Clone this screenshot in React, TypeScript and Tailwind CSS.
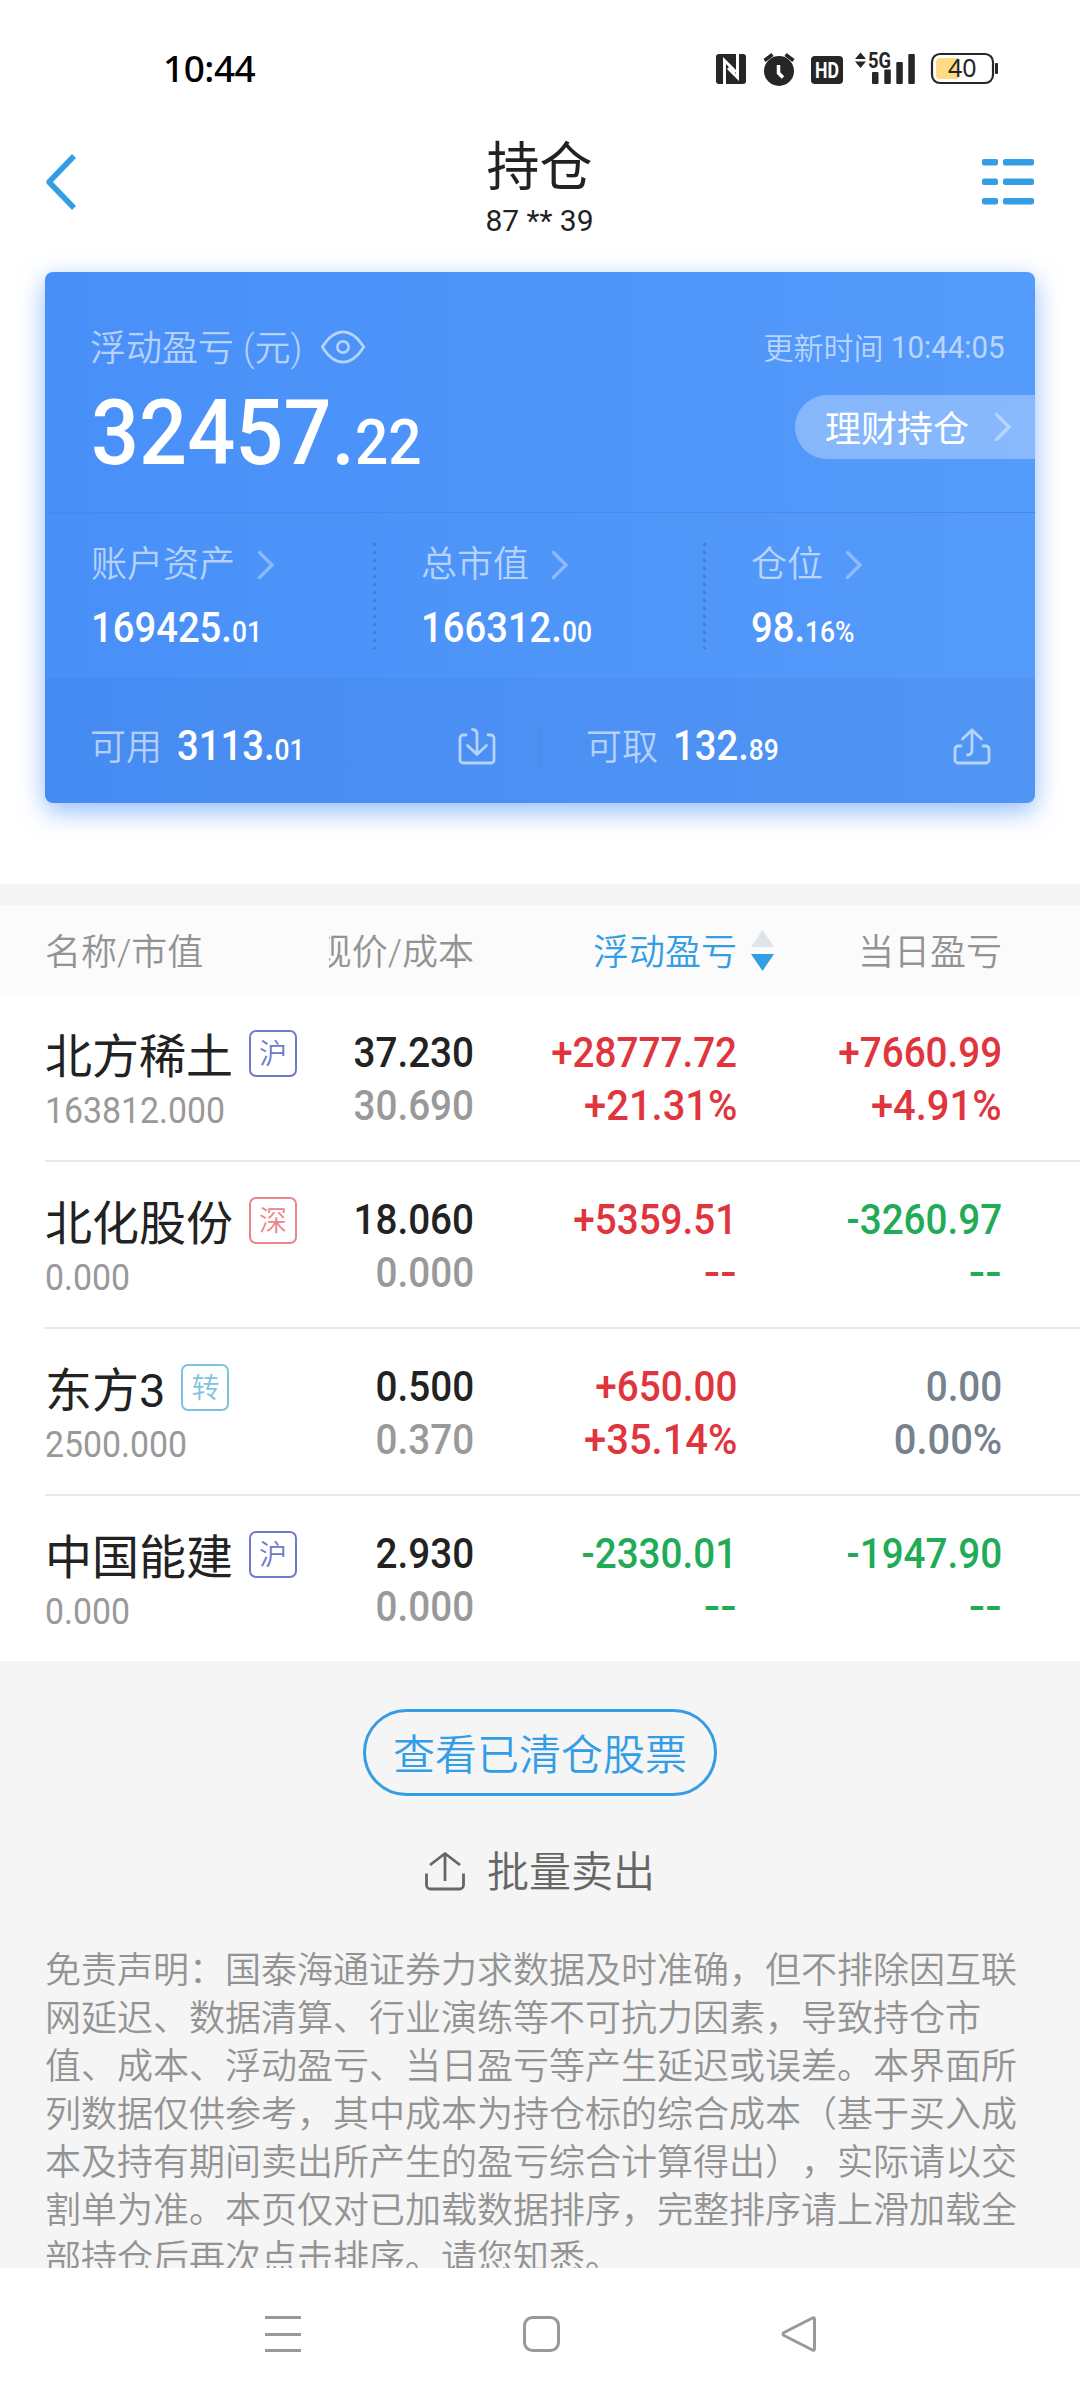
import { FC } from "react";
import clsx from "clsx";

type Tone = "up" | "down" | "flat";
type Market = "sh" | "sz" | "cv";

interface Holding {
  name: string;
  market: Market;
  value: string;
  price: string;
  cost: string;
  profit: [string, string];
  profitTone: Tone;
  today: [string, string];
  todayTone: Tone;
}

const holdings: Holding[] = [
  { name: "北方稀土", market: "sh", value: "163812.000", price: "37.230", cost: "30.690", profit: ["+28777.72", "+21.31%"], profitTone: "up", today: ["+7660.99", "+4.91%"], todayTone: "up" },
  { name: "北化股份", market: "sz", value: "0.000", price: "18.060", cost: "0.000", profit: ["+5359.51", "--"], profitTone: "up", today: ["-3260.97", "--"], todayTone: "down" },
  { name: "东方3", market: "cv", value: "2500.000", price: "0.500", cost: "0.370", profit: ["+650.00", "+35.14%"], profitTone: "up", today: ["0.00", "0.00%"], todayTone: "flat" },
  { name: "中国能建", market: "sh", value: "0.000", price: "2.930", cost: "0.000", profit: ["-2330.01", "--"], profitTone: "down", today: ["-1947.90", "--"], todayTone: "down" },
];

const toneClass: Record<Tone, string> = {
  up: "text-[#e0353d]",
  down: "text-[#21ab56]",
  flat: "text-[#76828e]",
};

const marketBadge: Record<Market, { label: string; className: string }> = {
  sh: { label: "沪", className: "border-[#7179cb] text-[#7179cb]" },
  sz: { label: "深", className: "border-[#ec858b] text-[#ec858b]" },
  cv: { label: "转", className: "border-[#7fc4dc] text-[#7fc4dc]" },
};

const disclaimer = [
  "免责声明：国泰海通证券力求数据及时准确，但不排除因互联",
  "网延迟、数据清算、行业演练等不可抗力因素，导致持仓市",
  "值、成本、浮动盈亏、当日盈亏等产生延迟或误差。本界面所",
  "列数据仅供参考，其中成本为持仓标的综合成本（基于买入成",
  "本及持有期间卖出所产生的盈亏综合计算得出），实际请以交",
  "割单为准。本页仅对已加载数据排序，完整排序请上滑加载全",
  "部持仓后再次点击排序。请您知悉。",
];

const StatusBar: FC = () => (
  <div className="flex h-[136px] items-center justify-between pl-[163px] pr-[81px] text-[#262626]">
    <span className="mb-[2px] font-['Noto_Sans',sans-serif] text-[37px] leading-none font-[470] tracking-[-0.5px] text-black">10:44</span>
    <svg width="284" height="40" viewBox="715 48 284 40" fill="currentColor">
      {/* nfc */}
      <rect x="716" y="54" width="30" height="30" rx="3" />
      <path d="M724.500 84V60.500l11.500 11.500M737.500 54v23.500L728 68" fill="none" stroke="#fff" strokeWidth="3" />
      {/* alarm */}
      <circle cx="779" cy="71" r="15" />
      <path d="M764.500 60.500l8-6M793.500 60.500l-8-6" stroke="currentColor" strokeWidth="3.500" />
      <path d="M778.500 65v8l4.500 4.500" fill="none" stroke="#fff" strokeWidth="3.500" />
      {/* hd */}
      <rect x="811" y="56" width="32" height="28" rx="4" />
      <text x="827" y="78" textAnchor="middle" fill="#fff" fontSize="22" fontWeight="700" fontFamily="Roboto, sans-serif" textLength="24" lengthAdjust="spacingAndGlyphs">HD</text>
      {/* signal */}
      <path d="M855 59l5.500-6.500 5.500 6.500zM855 61.500h11l-5.500 6.500z" />
      <text x="868" y="68" fontSize="22" fontWeight="700" fontFamily="Roboto, sans-serif" textLength="23" lengthAdjust="spacingAndGlyphs">5G</text>
      <rect x="872" y="72" width="6.500" height="12" rx="1" />
      <rect x="884.300" y="69.500" width="6.500" height="14.500" rx="1" />
      <rect x="896.300" y="62" width="6.500" height="22" rx="1" />
      <rect x="908.300" y="54" width="6.500" height="30" rx="1" />
      {/* battery */}
      <rect x="932" y="54" width="61" height="29" rx="8" fill="none" stroke="currentColor" strokeWidth="2.200" />
      <path d="M940 58h18.500v21H940a4 4 0 0 1-4-4V62a4 4 0 0 1 4-4z" fill="#ffdb85" />
      <rect x="995" y="63" width="3" height="11" rx="1" />
      <text x="962.300" y="77.300" textAnchor="middle" fontSize="25" fontFamily="Noto Sans, sans-serif">40</text>
    </svg>
  </div>
);

const Header: FC = () => (
  <div className="flex h-[136px] items-start justify-between pr-[46px] pl-[45px]">
    <svg className="mt-[18px]" width="52" height="56" viewBox="0 0 52 56" fill="none" stroke="#339de6" strokeWidth="5.500">
      <path d="M29 2L4 28l25 26" strokeLinejoin="round" />
    </svg>
    <div className="flex flex-col items-center text-[#222]">
      <h1 className="pt-[3px] text-[53px] leading-[58px]">持仓</h1>
      <span className="text-[30px] leading-[47px]">87 ** 39</span>
    </div>
    <svg className="mt-[22px]" width="52" height="48" viewBox="0 0 52 48" fill="#339de6">
      {[1, 20.5, 40].map((y) => (
        <g key={y}>
          <rect x="0" y={y} width="16" height="6.500" rx="2" />
          <rect x="21" y={y} width="31" height="6.500" rx="2" />
        </g>
      ))}
    </svg>
  </div>
);

const Chevron: FC<{ className?: string }> = ({ className }) => (
  <svg className={className} width="18" height="30" viewBox="0 0 18 30" fill="none" stroke="currentColor" strokeWidth="3.500" strokeLinecap="round">
    <path d="M2.500 2.500L15 15 2.500 27.500" />
  </svg>
);

// figures are set narrower than the labels
const Amount: FC<{ whole: string; rest: string }> = ({ whole, rest }) => (
  <span className="origin-left scale-x-91 text-[42px] leading-[50px] font-medium text-white">
    {whole}
    <span className="text-[29px]">{rest}</span>
  </span>
);

const StatCell: FC<{ label: string; whole: string; rest: string; divider?: boolean }> = ({ label, whole, rest, divider }) => (
  <div className="flex justify-between">
    <div className="pt-[26px] pl-[46px]">
      <div className="flex items-center gap-[22px]">
        <span className="text-[36px] leading-[52px] font-[350] text-white/60">{label}</span>
        <Chevron className="text-white/35" />
      </div>
      <div className="mt-[12px] flex">
        <Amount whole={whole} rest={rest} />
      </div>
    </div>
    {divider && (
      <svg className="mt-[30px] -mr-px" width="3" height="106">
        <line x1="1.500" y1="0" x2="1.500" y2="106" stroke="#3f7fdc" strokeWidth="3" strokeDasharray="3 5" />
      </svg>
    )}
  </div>
);

const SummaryCard: FC = () => (
  <section className="mx-[45px] flex h-[531px] flex-col overflow-hidden rounded-[8px] bg-linear-to-r from-[#488ff8] to-[#559bfb] shadow-[0_8px_26px_rgba(72,143,248,0.6)]">
    <div className="flex h-[240px] justify-between pt-[51px] pl-[45px]">
      <div className="flex flex-col">
        <div className="flex items-center text-white/60">
          <span className="text-[36px] leading-[52px] font-[350]">浮动盈亏</span>
          <span className="ml-[9px] text-[36px] leading-[52px] font-[350]">(元)</span>
          <svg className="mb-[4px] ml-[18px]" width="46" height="34" viewBox="0 0 48 36" fill="none" stroke="currentColor" strokeWidth="2.800">
            <path d="M2 18C9 7 16 2 24 2s15 5 22 16c-7 11-14 16-22 16S9 29 2 18z" strokeLinejoin="round" />
            <circle cx="24" cy="18" r="6" />
          </svg>
        </div>
        <span className="mt-[8px] ml-px origin-left scale-x-93 text-[91px] leading-[100px] font-medium text-white">
          32457.<span className="text-[63px]">22</span>
        </span>
      </div>
      <div className="flex flex-col items-end">
        <div className="flex gap-[2px] pr-[30px] text-white/60">
          <span className="text-[30px] leading-[51px] font-[350]">更新时间</span>
          <span className="origin-right scale-x-95 text-[31px] leading-[49px] font-[450]">10:44:05</span>
        </div>
        <button className="mt-[21px] flex h-[64px] w-[240px] items-center justify-between rounded-l-full bg-white/30 pr-[23px] pl-[30px] text-white">
          <span className="pt-[6px] text-[36px] leading-none">理财持仓</span>
          <Chevron className="text-white/40" />
        </button>
      </div>
    </div>
    <div className="grid h-[166px] grid-cols-3 border-t border-[#478be8]">
      <StatCell label="账户资产" whole="169425." rest="01" divider />
      <StatCell label="总市值" whole="166312." rest="00" divider />
      <StatCell label="仓位" whole="98." rest="16%" />
    </div>
    <div className="flex h-[125px] items-center bg-[#3f7fdc]/20 px-[45px] pt-[11px] text-white/60">
      <div className="flex w-[449px] items-center gap-[15px] pr-[43px]">
        <span className="pt-[3px] text-[36px] leading-none font-[350]">可用</span>
        <div className="flex pt-[4px]">
          <Amount whole="3113." rest="01" />
        </div>
        <svg className="ml-auto" width="38" height="38" viewBox="0 0 38 38" fill="none" stroke="currentColor" strokeWidth="2.800" strokeLinecap="round" strokeLinejoin="round">
          <path d="M8 8H5a3 3 0 0 0-3 3v22a3 3 0 0 0 3 3h28a3 3 0 0 0 3-3V11a3 3 0 0 0-3-3h-3" />
          <path d="M14.500 2.500c3.500 0 4.500 2 4.500 5v20M9.500 18.500l9.500 9 9.500-9" />
        </svg>
      </div>
      <div className="h-[42px] w-px bg-[#3f7fdc]/50" />
      <div className="-mr-px flex flex-1 items-center gap-[15px] pl-[46px]">
        <span className="pt-[3px] text-[36px] leading-none font-[350]">可取</span>
        <div className="flex pt-[4px]">
          <Amount whole="132." rest="89" />
        </div>
        <svg className="ml-auto" width="38" height="38" viewBox="0 0 38 38" fill="none" stroke="currentColor" strokeWidth="2.800" strokeLinecap="round" strokeLinejoin="round">
          <path d="M8 19H5a3 3 0 0 0-3 3v11a3 3 0 0 0 3 3h28a3 3 0 0 0 3-3V22a3 3 0 0 0-3-3h-3" />
          <path d="M14.500 28c3.500 0 4.500-2 4.500-5V3M9.500 12L19 3l9.500 9" />
        </svg>
      </div>
    </div>
  </section>
);

const columns = "grid grid-cols-[284px_145px_263px_265px]";

const TableHead: FC = () => (
  <div className={clsx(columns, "h-[90px] items-center bg-[#fbfbfb] pt-[5px] pl-[45px] text-[36px] leading-[52px] font-[350] text-[#939393]")}>
    <span>名称/市值</span>
    <span className="flex justify-end overflow-hidden whitespace-nowrap">现价/成本</span>
    <span className="flex items-center justify-end text-[#339de6]">
      浮动盈亏
      <svg className="-mr-[37px] mb-[5px] ml-[14px]" width="23" height="41" viewBox="0 0 23 41">
        <path d="M11.500 0L23 17H0z" fill="#dfe4e8" />
        <path d="M0 24h23L11.500 41z" fill="#339de6" />
      </svg>
    </span>
    <span className="text-right">当日盈亏</span>
  </div>
);

const Figure: FC<{ text: string; className?: string }> = ({ text, className }) => (
  <span
    className={clsx(
      "origin-right",
      text === "--" ? "scale-x-115" : text.endsWith("%") ? "scale-x-95" : "scale-x-92",
      className,
    )}
  >
    {text}
  </span>
);

const Pair: FC<{ items: [string, string]; className?: string; secondClassName?: string }> = ({ items, className, secondClassName }) => (
  <div className={clsx("flex flex-col items-end pt-[31px] text-[42px] leading-[53px] font-medium", className)}>
    <Figure text={items[0]} />
    <Figure text={items[1]} className={secondClassName} />
  </div>
);

const HoldingRow: FC<{ item: Holding; last: boolean }> = ({ item, last }) => {
  const badge = marketBadge[item.market];
  return (
    <div className={clsx(columns, "ml-[45px] border-[#e8e8e8]", last ? "h-[165px]" : "h-[167px] border-b-2")}>
      <div className="pt-[33px]">
        <div className="flex h-[51px] items-center gap-[16px]">
          <span className="mt-[6px] text-[47px] leading-[51px] whitespace-nowrap text-[#222]">{item.name}</span>
          <span className={clsx("flex h-[47px] w-[48px] items-center justify-center rounded-[7px] border-2 pt-[3px] text-[28px] leading-none font-[350]", badge.className)}>{badge.label}</span>
        </div>
        <div className="mt-[8px] origin-left scale-x-94 text-[36px] leading-[48px] font-[450] text-[#999]">{item.value}</div>
      </div>
      <Pair items={[item.price, item.cost]} className="text-[#222]" secondClassName="text-[#999]" />
      <Pair items={item.profit} className={toneClass[item.profitTone]} />
      <Pair items={item.today} className={toneClass[item.todayTone]} />
    </div>
  );
};

const NavBar: FC = () => (
  <nav className="flex h-[132px] justify-between bg-white pt-[48px] pr-[261px] pl-[264px]">
    <svg width="38" height="38" viewBox="0 0 38 38" stroke="#999" strokeWidth="3">
      <path d="M1 1.500h36M1 18.500h36M1 34.500h36" />
    </svg>
    <svg width="38" height="38" viewBox="0 0 38 38" fill="none" stroke="#999" strokeWidth="3">
      <rect x="1.500" y="1.500" width="34" height="33" rx="8" />
    </svg>
    <svg width="38" height="38" viewBox="0 0 38 38" fill="none" stroke="#999" strokeWidth="3" strokeLinejoin="round">
      <path d="M31.500 2L3 16.500q-2 1.500 0 3L31.500 34q2 .8 2-1V3q0-2-2-1z" />
    </svg>
  </nav>
);

export default function App() {
  return (
    <main className="flex h-[2400px] w-[1080px] flex-col overflow-hidden bg-white font-['Roboto','Noto_Sans_CJK_SC',sans-serif]">
      <StatusBar />
      <Header />
      <SummaryCard />
      <div className="mt-[81px] h-[21px] shrink-0 bg-[#f5f5f5]" />
      <TableHead />
      {holdings.map((item, i) => (
        <HoldingRow key={item.name} item={item} last={i === holdings.length - 1} />
      ))}
      <div className="flex h-[607px] shrink-0 flex-col items-center overflow-hidden bg-[#f5f5f5] pt-[48px]">
        <button className="flex h-[87px] w-[354px] shrink-0 items-center justify-center rounded-full border-3 border-[#339de6] pt-[6px] text-[42px] leading-none font-[350] text-[#339de6]">查看已清仓股票</button>
        <button className="mt-[43px] flex h-[64px] shrink-0 items-center gap-[22px] text-[42px] leading-none font-[350] text-[#666]">
          <svg width="40" height="40" viewBox="0 0 40 40" fill="none" stroke="#666" strokeWidth="2.800" strokeLinejoin="round">
            <path d="M1.500 22.500V34a4 4 0 0 0 4 4h29a4 4 0 0 0 4-4V22.500M20 30V2.500M5 14L20 2.500 35 14" />
          </svg>
          <span className="pt-[4px]">批量卖出</span>
        </button>
        <p className="mt-[44px] w-[990px] text-[36px] leading-[48px] font-[350] whitespace-nowrap text-[#939393] [text-spacing-trim:space-all]">
          {disclaimer.map((line) => (
            <span key={line} className="block">{line}</span>
          ))}
        </p>
      </div>
      <NavBar />
    </main>
  );
}
